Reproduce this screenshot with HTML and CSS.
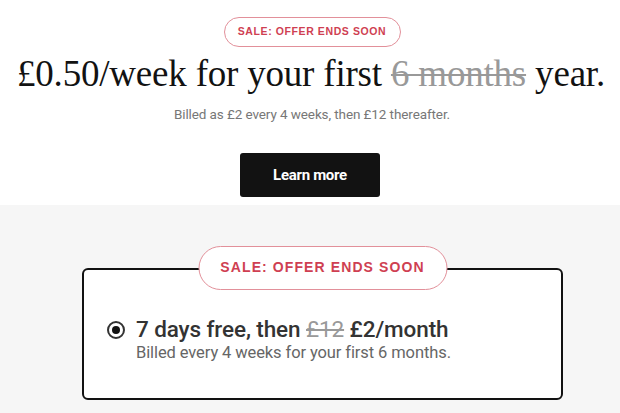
FILE: index.html
```html
<!DOCTYPE html>
<html>
<head>
<meta charset="utf-8">
<link rel="stylesheet" href="styles.css">
</head>
<body>
<section class="hero">
  <div class="pill pill-small">SALE: OFFER ENDS SOON</div>
  <h1 class="headline">£0.50/week for your first <s class="old">6 months</s> year.</h1>
  <p class="billed">Billed as £2 every 4 weeks, then £12 thereafter.</p>
  <button class="cta">Learn more</button>
</section>
<section class="offers">
  <div class="card">
    <div class="pill pill-card">SALE: OFFER ENDS SOON</div>
    <div class="option">
      <span class="radio"><span class="dot"></span></span>
      <div class="option-text">
        <div class="price">7 days free, then <s class="old-price">£12</s> £2/month</div>
        <div class="terms">Billed every 4 weeks for your first 6 months.</div>
      </div>
    </div>
  </div>
</section>
</body>
</html>
```
FILE: styles.css
```css
* { box-sizing: border-box; }
html, body { margin: 0; padding: 0; }
body { background: #f6f6f6; font-family: "Liberation Sans", Arial, sans-serif; width: 620px; height: 413px; overflow: hidden; }

.hero { background: #fff; display: flex; flex-direction: column; align-items: center; padding-top: 17px; height: 205px; }

.pill { border: 1.5px solid #e2909a; color: #cf3f52; font-weight: bold; border-radius: 999px; background: #fff; text-align: center; }
.pill-small { font-size: 10.5px; letter-spacing: 0.6px; padding: 0; height: 30px; line-height: 27px; width: 177px; margin-left: 4px; }

.headline { font-family: "Liberation Serif", "Times New Roman", serif; font-weight: normal; font-size: 37px; color: #121212; margin: 5px 0 0 2px; line-height: 44px; letter-spacing: -0.2px; white-space: nowrap; }
.old { color: #999; text-decoration-thickness: 2px; }

.billed { font-family: "Roboto", "Liberation Sans", sans-serif; font-size: 13.5px; color: #777; margin: 10px 0 0 4px; letter-spacing: -0.1px; }

.cta { margin-top: 31px; width: 140px; height: 44px; background: #121212; color: #fff; border: none; border-radius: 3px; font-family: "Roboto", "Liberation Sans", sans-serif; font-weight: bold; font-size: 15px; letter-spacing: -0.3px; }

.offers { display: flex; justify-content: center; padding: 41px 0 0 25px; }
.card { position: relative; width: 481px; height: 132px; margin-top: 22px; background: #fff; border: 2px solid #121212; border-radius: 6px; padding: 46px 0 0 23px; }
.pill-card { position: absolute; top: -24px; left: 50%; transform: translateX(-50%); width: 249px; height: 44px; line-height: 41px; font-size: 14px; letter-spacing: 1.1px; }

.option { display: flex; align-items: flex-start; }
.radio { width: 18px; height: 18px; border: 2.5px solid #333; border-radius: 50%; display: flex; align-items: center; justify-content: center; margin: 5px 11px 0 0; flex: none; }
.dot { width: 8px; height: 8px; background: #121212; border-radius: 50%; }
.price { font-family: "Roboto", "Liberation Sans", sans-serif; font-weight: 500; font-size: 22.5px; color: #333; line-height: 27px; letter-spacing: -0.1px; }
.old-price { color: #999; font-weight: normal; }
.terms { font-family: "Roboto", "Liberation Sans", sans-serif; font-size: 16.5px; color: #666; margin-top: 0; letter-spacing: -0.1px; }
```
